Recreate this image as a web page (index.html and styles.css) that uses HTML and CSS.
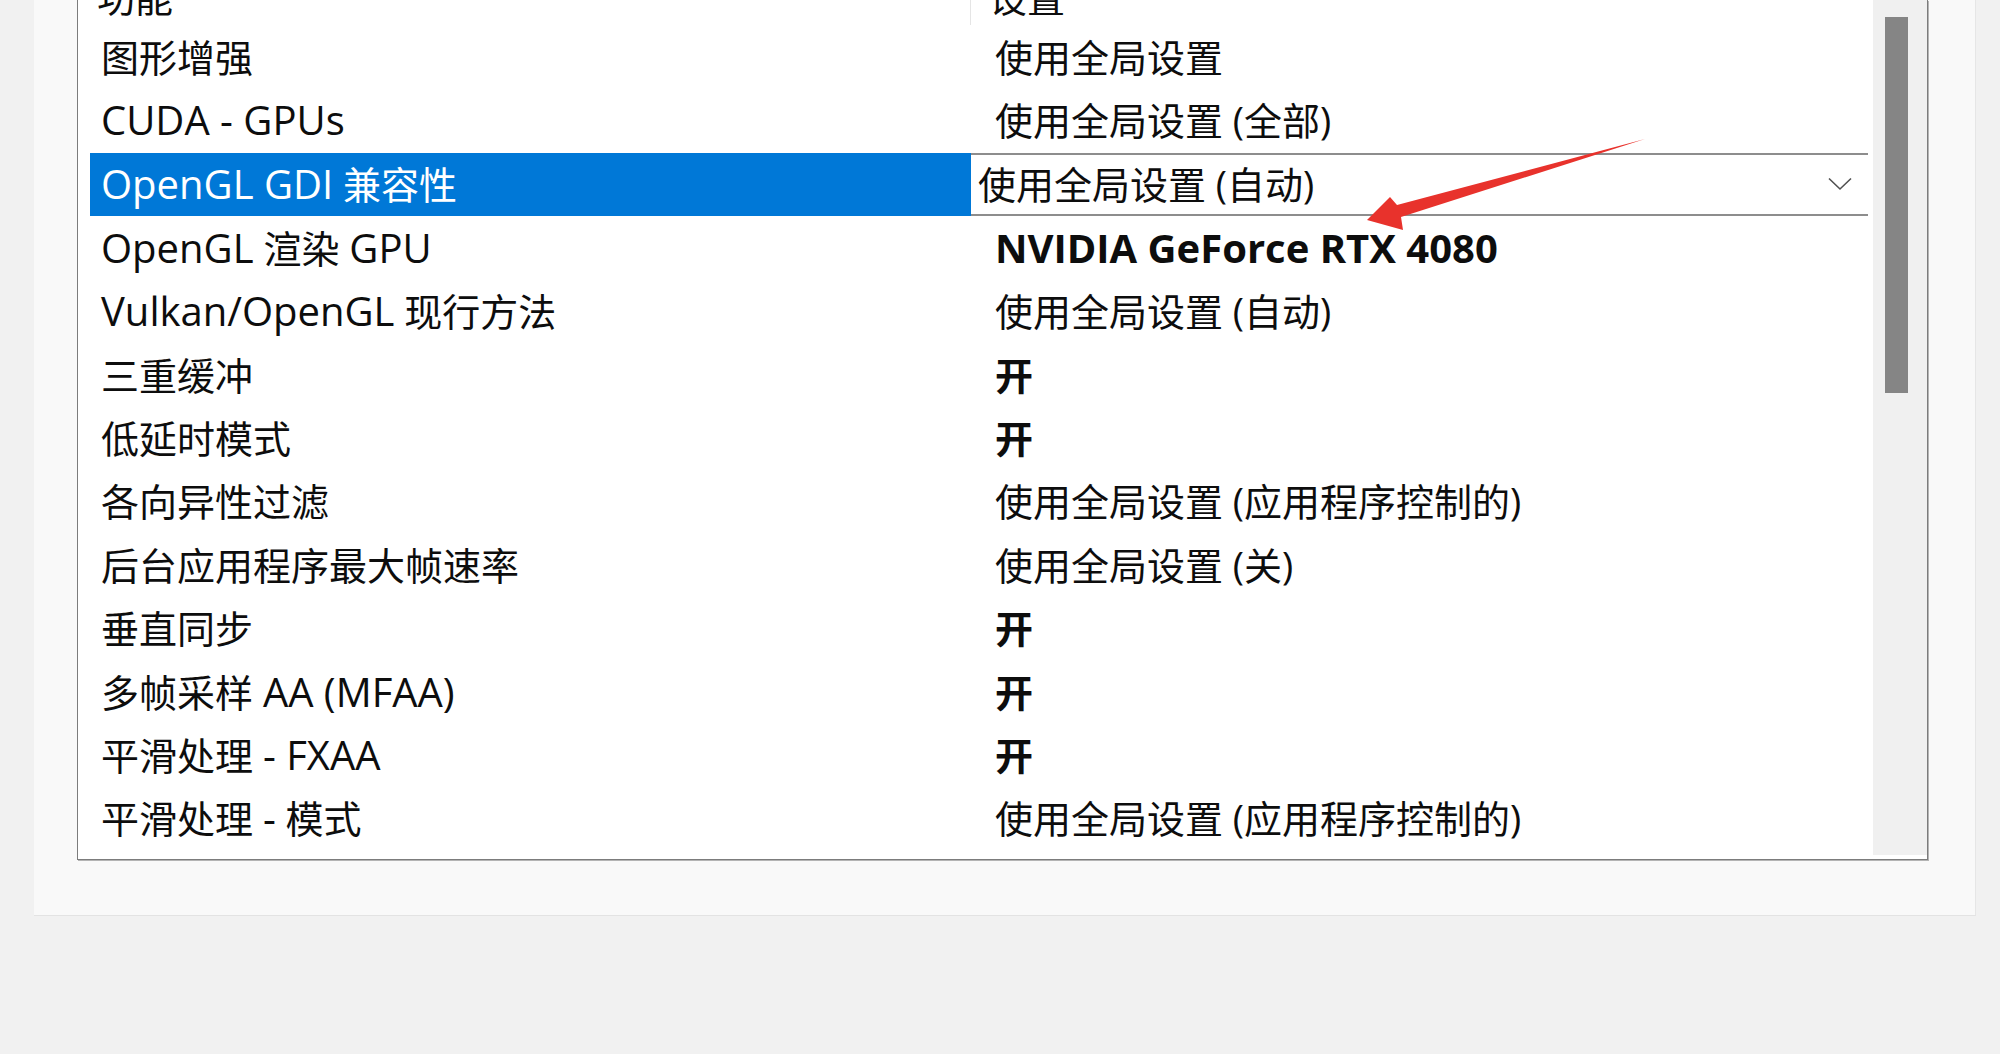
FILE: index.html
```html
<!DOCTYPE html>
<html lang="zh-CN">
<head>
    <meta charset="UTF-8">
    <title>管理 3D 设置 - 程序设置</title>
    <link rel="stylesheet" href="styles.css">
</head>
<body>
    <div class="panel">
        <div class="list">
            <div class="list-body">
                <div class="row header">
                    <div class="cell name">功能</div>
                    <div class="cell value">设置</div>
                </div>
                <div class="row">
                    <div class="cell name">图形增强</div>
                    <div class="cell value">使用全局设置</div>
                </div>
                <div class="row">
                    <div class="cell name"><span class="en">CUDA - GPUs</span></div>
                    <div class="cell value">使用全局设置 (全部)</div>
                </div>
                <div class="row selected">
                    <div class="cell name"><span class="en">OpenGL GDI</span>&nbsp;兼容性</div>
                    <div class="cell value dropdown">
                        <span>使用全局设置 (自动)</span>
                        <svg class="chevron" width="24" height="14" viewBox="0 0 24 14">
                            <path d="M1 1.5 L12 12 L23 1.5" fill="none" stroke="#505050" stroke-width="1.6"/>
                        </svg>
                    </div>
                </div>
                <div class="row">
                    <div class="cell name"><span class="en">OpenGL</span>&nbsp;渲染&nbsp;<span class="en">GPU</span></div>
                    <div class="cell value bold"><span class="en">NVIDIA GeForce RTX 4080</span></div>
                </div>
                <div class="row">
                    <div class="cell name"><span class="en">Vulkan/OpenGL</span>&nbsp;现行方法</div>
                    <div class="cell value">使用全局设置 (自动)</div>
                </div>
                <div class="row">
                    <div class="cell name">三重缓冲</div>
                    <div class="cell value bold">开</div>
                </div>
                <div class="row">
                    <div class="cell name">低延时模式</div>
                    <div class="cell value bold">开</div>
                </div>
                <div class="row">
                    <div class="cell name">各向异性过滤</div>
                    <div class="cell value">使用全局设置 (应用程序控制的)</div>
                </div>
                <div class="row">
                    <div class="cell name">后台应用程序最大帧速率</div>
                    <div class="cell value">使用全局设置 (关)</div>
                </div>
                <div class="row">
                    <div class="cell name">垂直同步</div>
                    <div class="cell value bold">开</div>
                </div>
                <div class="row">
                    <div class="cell name">多帧采样&nbsp;<span class="en">AA (MFAA)</span></div>
                    <div class="cell value bold">开</div>
                </div>
                <div class="row">
                    <div class="cell name">平滑处理&nbsp;<span class="en">- FXAA</span></div>
                    <div class="cell value bold">开</div>
                </div>
                <div class="row">
                    <div class="cell name">平滑处理&nbsp;<span class="en">-</span>&nbsp;模式</div>
                    <div class="cell value">使用全局设置 (应用程序控制的)</div>
                </div>
            </div>
            <div class="scrollbar">
                <div class="thumb"></div>
            </div>
        </div>
    </div>

    <!-- red annotation arrow pointing at the selected setting -->
    <svg class="arrow" width="2000" height="1054" viewBox="0 0 2000 1054">
        <polygon points="1367,220 1390,197 1397,205 1645,139 1401,217 1403,230" fill="#e8322c"/>
    </svg>
</body>
</html>
```

FILE: styles.css
```css
body {
    margin: 0;
    width: 2000px;
    height: 1054px;
    overflow: hidden;
    background-color: #f1f1f1;
    font-family: "Segoe UI", "Open Sans", "Noto Sans CJK SC", sans-serif;
    color: #0d0d0d;
}

.panel {
    box-sizing: border-box;
    margin-left: 34px;
    width: 1942px;
    height: 916px;
    padding: 0 47px 55px 43px;
    background-color: #f9f9f9;
    border-right: 1px solid #e6e6e6;
    border-bottom: 1px solid #e3e3e3;
}

.list {
    display: flex;
    height: 860px;
    box-sizing: border-box;
    background-color: #fff;
    border: 1px solid #7c7c7c;
    border-top: none;
    box-shadow: 1px 1px 0 #b4b4b4;
    overflow: hidden;
}

.list-body {
    flex: 1;
    padding: 0 5px 0 12px;
}

.row {
    display: flex;
    height: 63.4px;
    font-size: 38px;
    line-height: 1;
}

.cell {
    display: flex;
    align-items: center;
    box-sizing: border-box;
    white-space: nowrap;
}

/* latin runs are drawn a little larger, as in the system UI font */
.en {
    font-size: 40px;
}

.cell.name {
    width: 881px;
    padding-left: 11px;
}

.cell.value {
    flex: 1;
    padding-left: 24px;
}

.cell.bold {
    font-weight: bold;
}

.header {
    height: 57px;
    margin-top: -32px;
}

.header .cell.name {
    padding-left: 7px;
    border-right: 1px solid #e5e5e5;
}

.header .cell.value {
    padding-left: 18px;
}

.selected {
    margin-top: 1px;
}

.selected .cell.name {
    background-color: #0078d7;
    color: #fff;
}

.dropdown {
    justify-content: space-between;
    border-top: 2px solid #8d8d8d;
    border-bottom: 2px solid #8d8d8d;
}

.cell.value.dropdown {
    padding-left: 7px;
    padding-right: 16px;
}

.scrollbar {
    width: 54px;
    background-color: #f0f0f0;
    margin-bottom: 4px;
}

.thumb {
    width: 23px;
    height: 376px;
    margin: 17px 0 0 12px;
    background-color: #858585;
}

.arrow {
    position: absolute;
    top: 0;
    left: 0;
    pointer-events: none;
}
```
